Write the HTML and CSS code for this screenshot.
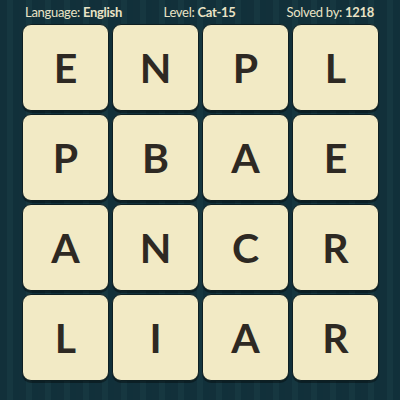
FILE: index.html
```html
<!DOCTYPE html>
<html>
<head>
<meta charset="utf-8">
<link rel="stylesheet" href="styles.css">
</head>
<body>
<div class="page">
  <div class="header">
    <div class="info left">Language: <b>English</b></div>
    <div class="info mid">Level: <b>Cat-15</b></div>
    <div class="info right">Solved by: <b>1218</b></div>
  </div>
  <div class="board">
    <div class="tile">E</div><div class="tile">N</div><div class="tile">P</div><div class="tile">L</div>
    <div class="tile">P</div><div class="tile">B</div><div class="tile">A</div><div class="tile">E</div>
    <div class="tile">A</div><div class="tile">N</div><div class="tile">C</div><div class="tile">R</div>
    <div class="tile">L</div><div class="tile">I</div><div class="tile">A</div><div class="tile">R</div>
  </div>
</div>
</body>
</html>
```

FILE: styles.css
```css
html, body {
  margin: 0;
  padding: 0;
}
body {
  width: 400px;
  height: 400px;
  overflow: hidden;
  background-color: #13323a;
  background-image: repeating-linear-gradient(90deg, #12303a 0 7px, #163740 7px 13px, #11303a 13px 19px);
  font-family: Lato, "Open Sans", sans-serif;
}
.page {
  width: 400px;
  height: 400px;
}
.header {
  height: 24px;
  display: grid;
  grid-template-columns: 1fr auto 1fr;
  align-items: center;
  padding: 0 26px 0 25px;
  color: #e9e3c6;
  font-size: 13px;
  letter-spacing: -0.3px;
  line-height: 24px;
}
.info b {
  font-weight: 700;
}
.left { justify-self: start; }
.mid { justify-self: center; }
.right { justify-self: end; }
.board {
  display: grid;
  grid-template-columns: repeat(4, 87px);
  grid-template-rows: repeat(4, 87px);
  gap: 3px;
  padding-left: 22px;
}
.tile {
  background: #f2eac5;
  border: 1px solid #0e1f22;
  border-radius: 9px;
  box-shadow: 0 2px 0 rgba(0,0,0,0.35);
  display: flex;
  align-items: center;
  justify-content: center;
  color: #2e2923;
  font-size: 41px;
  font-weight: 700;
  box-sizing: border-box;
}
```
